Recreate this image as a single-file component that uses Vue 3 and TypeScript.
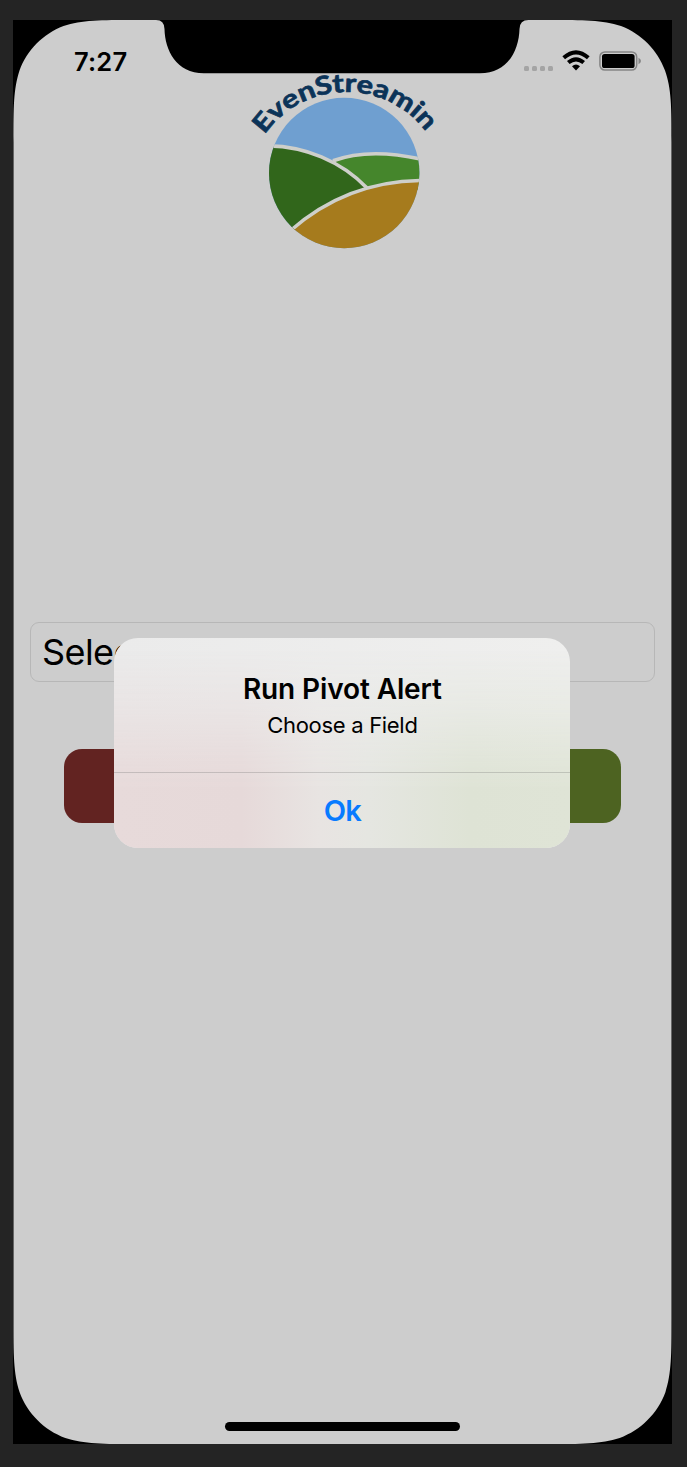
<script setup lang="ts">
import { ref } from 'vue'

const time = ref('7:27')
const fieldLabel = ref('Selec')
const alertOpen = ref(true)
const alert = { title: 'Run Pivot Alert', message: 'Choose a Field', action: 'Ok' }
</script>

<template>
  <div class="desktop">
    <div class="device">
      <svg class="glass" viewBox="0 0 659 1424" aria-hidden="true">
        <path
          fill="#cdcdcd"
          d="M.5 122C.5 87 .5 69 6.500 50.500C14 30 30 14 50.500 6C69 0 87 0 122.500 0H143Q151.300 0 151.500 9C152 30 163 53.300 191 53.300H467C495 53.300 506 30 506.500 9Q506.700 0 515.500 0H536C571 0 589 0 608 6C628.500 14 644.500 30 652 50.500C658.500 69 658.500 87 658.500 122V1299C658.500 1335 658.500 1353 652.400 1372.200C644.600 1393.400 627.900 1410.100 606.700 1417.900C587.500 1424 569.500 1424 533 1424H126C89.500 1424 71.500 1424 52.300 1417.900C31.100 1410.100 14.400 1393.400 6.600 1372.200C.5 1353 .5 1335 .5 1299Z"
        />
      </svg>

      <header class="status">
        <span class="time">{{ time }}</span>
        <div class="indicators">
          <span class="dots"><i v-for="n in 4" :key="n" /></span>
          <svg class="wifi" viewBox="0 0 28 21">
            <g fill="none" stroke="#000" stroke-width="4">
              <path d="M1.700 7.800Q14-3.200 26.300 7.800" />
              <path d="M6.300 12.600Q14 6 21.700 12.600" />
            </g>
            <path d="M10 16.200Q14 12.800 18 16.200L14 20.600Z" />
          </svg>
          <svg class="battery" viewBox="0 0 43 20">
            <rect x=".9" y=".9" width="36.800" height="18.200" rx="5" fill="none" stroke="#858585" stroke-width="1.500" />
            <rect x="3" y="3" width="32.600" height="14" rx="2.600" />
            <path d="M39.500 6.800Q42 8 42 10T39.500 13.200Z" fill="#858585" />
          </svg>
        </div>
      </header>

      <svg class="logo" viewBox="240 70 210 182">
        <defs>
          <clipPath id="disc"><circle cx="344.200" cy="173" r="75.200" /></clipPath>
          <path id="arc" d="M264.500 134.800A99.700 99.700 0 0 1 431 139" />
        </defs>
        <g clip-path="url(#disc)">
          <rect x="260" y="90" width="170" height="170" fill="#6f9fd0" />
          <path d="M333 161Q370 147 425 160V190L362 190Z" fill="#45862c" />
          <path d="M260 146C305 144 343 163 367 188L295 230L260 260Z" fill="#31661b" />
          <path d="M290 231Q348 180 425 180.500V260H270Z" fill="#a67b1d" />
          <g fill="none" stroke="#cecfca" stroke-width="3.600">
            <path d="M333 160.800Q370 147 425 160" />
            <path d="M260 146C305 144 343 163 367 188" />
            <path d="M290 231Q348 180 425 180.500" />
          </g>
        </g>
        <text class="brand"><textPath href="#arc" textLength="188" lengthAdjust="spacingAndGlyphs">EvenStreamin</textPath></text>
      </svg>

      <main class="form">
        <div class="select">{{ fieldLabel }}</div>
        <div class="actions">
          <button class="stop" aria-label="Stop" />
          <button class="run" aria-label="Run" />
        </div>
      </main>

      <div class="home" />

      <section v-if="alertOpen" class="alert" role="alertdialog">
        <div class="body">
          <h1>{{ alert.title }}</h1>
          <p>{{ alert.message }}</p>
        </div>
        <button class="ok">{{ alert.action }}</button>
      </section>
    </div>
  </div>
</template>

<style>
body {
  margin: 0;
  background: #242424;
}
</style>

<style scoped>
.desktop {
  box-sizing: border-box;
  width: 687px;
  height: 1467px;
  padding: 20px 0 0 13px;
  background: #242424;
  font-family: Inter, 'Liberation Sans', sans-serif;
  overflow: hidden;
}
.device {
  position: relative;
  display: flex;
  flex-direction: column;
  width: 659px;
  height: 1424px;
  background: #000;
}
.glass {
  position: absolute;
  inset: 0;
  width: 659px;
  height: 1424px;
}
.status,
.logo,
.form,
.home {
  position: relative;
}
.status {
  display: flex;
  justify-content: space-between;
  height: 50px;
  padding: 0 30px 0 61px;
}
.time {
  padding-top: 26px;
  font-size: 25.500px;
  line-height: 32px;
  font-weight: 600;
  letter-spacing: 0.200px;
}
.indicators {
  display: flex;
  align-items: flex-start;
}
.dots {
  display: flex;
  gap: 3px;
  margin: 46px 9px 0 0;
}
.dots i {
  width: 5px;
  height: 5px;
  border-radius: 1.500px;
  background: #a4a4a4;
}
.wifi {
  width: 28px;
  height: 21px;
  margin: 30px 9px 0 0;
}
.battery {
  width: 43px;
  height: 20px;
  margin-top: 31px;
}
.logo {
  width: 210px;
  height: 182px;
  margin-left: 227px;
  flex: none;
  overflow: visible;
}
.brand {
  font: 700 25.500px Lato, sans-serif;
  fill: #0b3358;
  stroke: #0b3358;
  stroke-width: 0.700px;
}
.form {
  padding: 370px 17px 0;
}
.select {
  box-sizing: border-box;
  height: 60px;
  padding-left: 11px;
  border: 1px solid #b7b7b7;
  border-radius: 9px;
  font-size: 36px;
  line-height: 59px;
  letter-spacing: -0.600px;
}
.actions {
  display: flex;
  justify-content: space-between;
  padding: 67px 34px 0;
}
.actions button {
  width: 250px;
  height: 74px;
  border: 0;
  border-radius: 18px;
}
.stop {
  background: #622321;
}
.run {
  background: #4d6321;
}
.home {
  width: 235px;
  height: 9px;
  margin: auto auto 13px 212px;
  border-radius: 5px;
  background: #000;
}
.alert {
  position: absolute;
  left: 101.400px;
  top: 618px;
  width: 456px;
  height: 210px;
  display: flex;
  flex-direction: column;
  border-radius: 24px;
  overflow: hidden;
  text-align: center;
  background: linear-gradient(90deg, #ebebeb, #efefee);
}
.alert::before {
  content: '';
  position: absolute;
  inset: 0;
  background: linear-gradient(90deg, #e7dada, #e6d9d9 28%, #e8e4e2 45%, #e5e6e1 56%, #dee3d5 78%, #dfe4d6);
  mask-image: linear-gradient(transparent 5%, rgba(0, 0, 0, 0.4) 35%, rgba(0, 0, 0, 0.85) 60%, #000 72%);
}
.body,
.ok {
  position: relative;
}
.body {
  box-sizing: border-box;
  height: 135px;
  padding-top: 33px;
  border-bottom: 1px solid rgba(90, 90, 90, 0.25);
}
h1 {
  margin: 0;
  font-size: 28px;
  line-height: 36px;
  font-weight: 600;
  letter-spacing: -0.120px;
}
p {
  margin: 3px 0 0;
  font-size: 22px;
  line-height: 30px;
  letter-spacing: -0.300px;
}
.ok {
  flex: 1;
  padding: 0;
  border: 0;
  background: none;
  font: 600 29px Inter, sans-serif;
  letter-spacing: -0.800px;
  color: #087bff;
}
</style>
